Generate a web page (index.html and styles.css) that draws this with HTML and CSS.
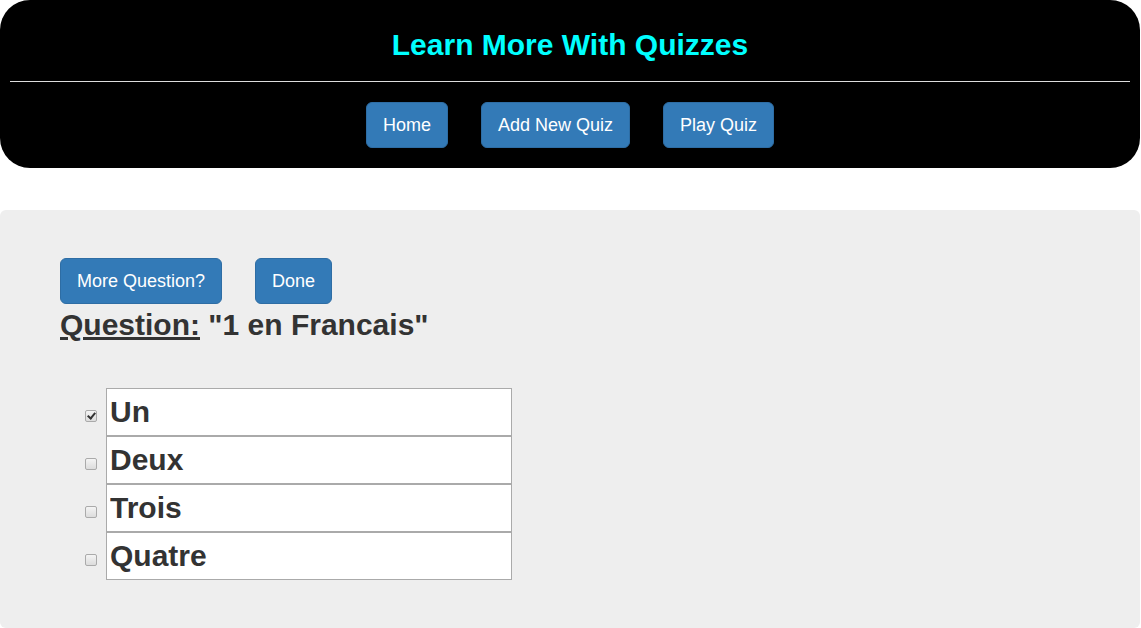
FILE: index.html
```html
<!DOCTYPE html>
<html>
<head>
<meta charset="utf-8">
<link rel="stylesheet" href="styles.css">
</head>
<body>
<div class="page">
  <header class="top">
    <h1 class="title">Learn More With Quizzes</h1>
    <hr class="rule">
    <nav class="nav">
      <a class="btn">Home</a>
      <a class="btn">Add New Quiz</a>
      <a class="btn">Play Quiz</a>
    </nav>
  </header>
  <main class="panel">
    <div class="actions">
      <a class="btn">More Question?</a>
      <a class="btn">Done</a>
    </div>
    <h2 class="question"><span class="qlabel">Question:</span> "1 en Francais"</h2>
    <ul class="answers">
      <li class="answer"><input type="checkbox" class="check" checked><input type="text" class="field" value="Un"></li>
      <li class="answer"><input type="checkbox" class="check"><input type="text" class="field" value="Deux"></li>
      <li class="answer"><input type="checkbox" class="check"><input type="text" class="field" value="Trois"></li>
      <li class="answer"><input type="checkbox" class="check"><input type="text" class="field" value="Quatre"></li>
    </ul>
  </main>
</div>
</body>
</html>
```
FILE: styles.css
```css
* { box-sizing: border-box; }
html, body { margin: 0; padding: 0; background: #fff; }
body { font-family: "Liberation Sans", Arial, sans-serif; color: #333; }
.page { width: 1140px; }
.top {
  background: #000;
  border-radius: 30px;
  padding: 30px 0 20px;
  text-align: center;
}
.title {
  margin: 0 0 21px;
  font-size: 30px;
  line-height: 30px;
  font-weight: bold;
  color: #00ffff;
}
.rule {
  margin: 0 10px;
  border: 0;
  border-top: 1px solid #ddd;
  height: 0;
}
.nav {
  margin-top: 20px;
  display: flex;
  justify-content: center;
  gap: 33px;
}
.btn {
  display: inline-block;
  height: 46px;
  padding: 0 16px;
  font-size: 18px;
  line-height: 44px;
  color: #fff;
  background: #337ab7;
  border: 1px solid #2e6da4;
  border-radius: 6px;
  white-space: nowrap;
}
.panel {
  margin-top: 42px;
  background: #eee;
  border-radius: 6px;
  padding: 48px 60px 48px;
  height: 418px;
}
.actions { display: flex; gap: 33px; }
.question {
  margin: 4px 0 0;
  font-size: 30px;
  line-height: 33px;
  font-weight: bold;
  color: #333;
}
.qlabel { text-decoration: underline; }
.answers {
  list-style: none;
  margin: 47px 0 0;
  padding: 0 0 0 21px;
}
.answer {
  display: flex;
  align-items: center;
  height: 48px;
}
.check {
  appearance: none;
  -webkit-appearance: none;
  width: 12px;
  height: 12px;
  margin: 7px 9px 0 4px;
  border: 1px solid #aaa;
  border-radius: 2px;
  background: linear-gradient(#f4f4f4, #dcdcdc);
  position: relative;
}
.check:checked::after {
  content: "";
  position: absolute;
  left: 3px;
  top: 0px;
  width: 3px;
  height: 6px;
  border: solid #333;
  border-width: 0 2px 2px 0;
  transform: rotate(40deg);
}
.field {
  width: 406px;
  height: 48px;
  border: 1px solid #aaa;
  background: #fff;
  padding: 0 3px;
  font-family: "Liberation Sans", Arial, sans-serif;
  font-size: 30px;
  font-weight: bold;
  color: #333;
  outline: none;
}
```
